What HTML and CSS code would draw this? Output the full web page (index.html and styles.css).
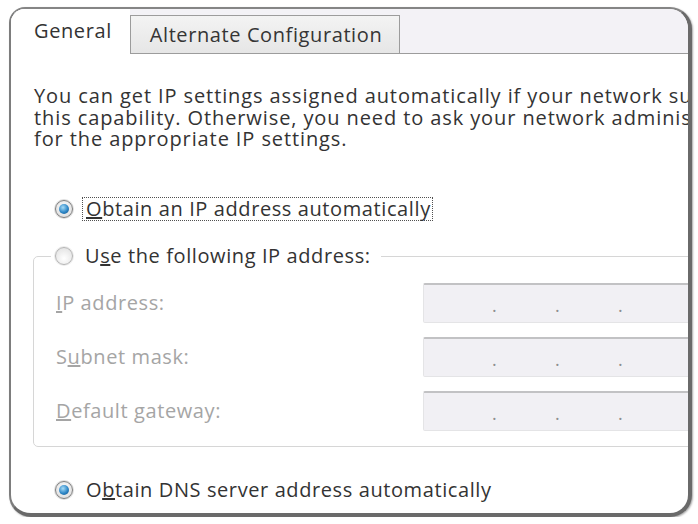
FILE: index.html
```html
<!DOCTYPE html>
<html>
<head>
<meta charset="utf-8">
<link rel="stylesheet" href="styles.css">
</head>
<body>
<div class="frame">
  <div class="tabs">
    <div class="tab tab-active">General</div>
    <div class="tab tab-other">Alternate Configuration</div>
    <div class="tab-fill"></div>
  </div>
  <div class="content">
    <p class="desc">You can get IP settings assigned automatically if your network supports<br>this capability. Otherwise, you need to ask your network administrator<br>for the appropriate IP settings.</p>
    <div class="opt opt-first">
      <span class="radio radio-on"><span class="dot"></span></span>
      <span class="label focus"><u>O</u>btain an IP address automatically</span>
    </div>
    <fieldset class="group">
      <legend class="opt legend">
        <span class="radio radio-off"></span>
        <span class="label">U<u>s</u>e the following IP address:</span>
      </legend>
      <div class="fields">
        <div class="frow">
          <span class="flabel"><u>I</u>P address:</span>
          <span class="ipbox"><span class="ipdot">.</span><span class="ipdot">.</span><span class="ipdot">.</span></span>
        </div>
        <div class="frow">
          <span class="flabel">S<u>u</u>bnet mask:</span>
          <span class="ipbox"><span class="ipdot">.</span><span class="ipdot">.</span><span class="ipdot">.</span></span>
        </div>
        <div class="frow">
          <span class="flabel"><u>D</u>efault gateway:</span>
          <span class="ipbox"><span class="ipdot">.</span><span class="ipdot">.</span><span class="ipdot">.</span></span>
        </div>
      </div>
    </fieldset>
    <div class="opt opt-last">
      <span class="radio radio-on"><span class="dot"></span></span>
      <span class="label">O<u>b</u>tain DNS server address automatically</span>
    </div>
  </div>
</div>
</body>
</html>
```
FILE: styles.css
```css
html, body {
  margin: 0;
  padding: 0;
  background: #ffffff;
}
body {
  font-family: "Open Sans", "Noto Sans", sans-serif;
  font-size: 20px;
  letter-spacing: 0.6px;
  color: #333333;
}
.frame {
  margin: 7px 0 0 9px;
  width: 677px;
  height: 504px;
  border-style: solid;
  border-color: #858585 #6a6a6a #6a6a6a #7d7d7d;
  border-width: 2px 4px 4px 2px;
  border-radius: 16px 22px 22px 22px;
  box-shadow: 1px 1px 2px rgba(0,0,0,0.35);
  overflow: hidden;
  background: #ffffff;
}
.tabs {
  display: flex;
  height: 45px;
  background: #f3f2f6;
}
.tab {
  box-sizing: border-box;
  line-height: 22px;
  white-space: nowrap;
}
.tab-active {
  width: 119px;
  height: 45px;
  background: #ffffff;
  padding: 11px 0 0 23px;
}
.tab-other {
  width: 270px;
  height: 39px;
  margin-top: 6px;
  border: 1px solid #9c9c9c;
  background: linear-gradient(#f3f3f3, #e6e6e6);
  display: flex;
  align-items: center;
  justify-content: center;
  padding: 1px 0 0 2px;
  color: #353535;
}
.tab-fill {
  flex: 1;
  height: 45px;
  box-sizing: border-box;
  border-bottom: 1px solid #9c9c9c;
}
.content {
  padding-left: 23px;
}
.desc {
  margin: 31px 0 0 0;
  line-height: 21.5px;
  letter-spacing: 0.9px;
  white-space: nowrap;
}
.opt {
  display: flex;
  align-items: center;
  height: 25px;
  white-space: nowrap;
}
.opt-first {
  margin-top: 47px;
}
.opt-last {
  margin-top: 31px;
}
.radio {
  box-sizing: border-box;
  width: 18px;
  height: 18px;
  border-radius: 50%;
  margin-left: 21px;
  display: flex;
  align-items: center;
  justify-content: center;
  flex: none;
}
.radio-on {
  border: 1px solid #7f7f7f;
  background: radial-gradient(circle at 50% 40%, #ffffff, #d6d6d6);
  box-shadow: 0 0 0 1px #dedede;
}
.radio-off {
  border: 1px solid #b4b4b4;
  background: radial-gradient(circle at 50% 65%, #ffffff, #dedede);
  box-shadow: 0 0 0 1px #ececec;
}
.dot {
  width: 10px;
  height: 10px;
  border-radius: 50%;
  background: radial-gradient(circle at 40% 35%, #a6dcf7, #2d86c6 55%, #154f80);
}
.label {
  margin-left: 9px;
  padding: 0 1px 0 3px;
  border: 1px dotted transparent;
  line-height: 22px;
}
.focus {
  border-color: #505050;
}
.group {
  margin: 22px 0 0 -1px;
  padding: 0 0 15px 0;
  width: 800px;
  border: 1px solid #d6d6d6;
  border-radius: 5px;
}
.legend {
  margin-left: 17px;
  padding: 0 8px 0 0;
}
.legend .radio {
  margin-left: 4px;
}
.legend .label {
  margin-left: 8px;
}
.fields {
  display: flex;
  flex-direction: column;
  gap: 14px;
  margin-top: 14px;
}
.frow {
  display: flex;
  align-items: center;
  height: 40px;
}
.flabel {
  width: 367px;
  padding-left: 22px;
  color: #a5a5a5;
}
.ipbox {
  box-sizing: border-box;
  width: 300px;
  height: 40px;
  background: #f1f0f4;
  border: 1px solid #e4e4e6;
  border-top: 2px solid #c2c2c4;
  border-radius: 2px;
  display: flex;
  align-items: center;
  padding: 4px 0 0 68px;
  gap: 57px;
  letter-spacing: 0;
}
.ipdot {
  width: 6px;
  color: #8e8e8e;
  font-size: 18px;
  line-height: 20px;
}
```
